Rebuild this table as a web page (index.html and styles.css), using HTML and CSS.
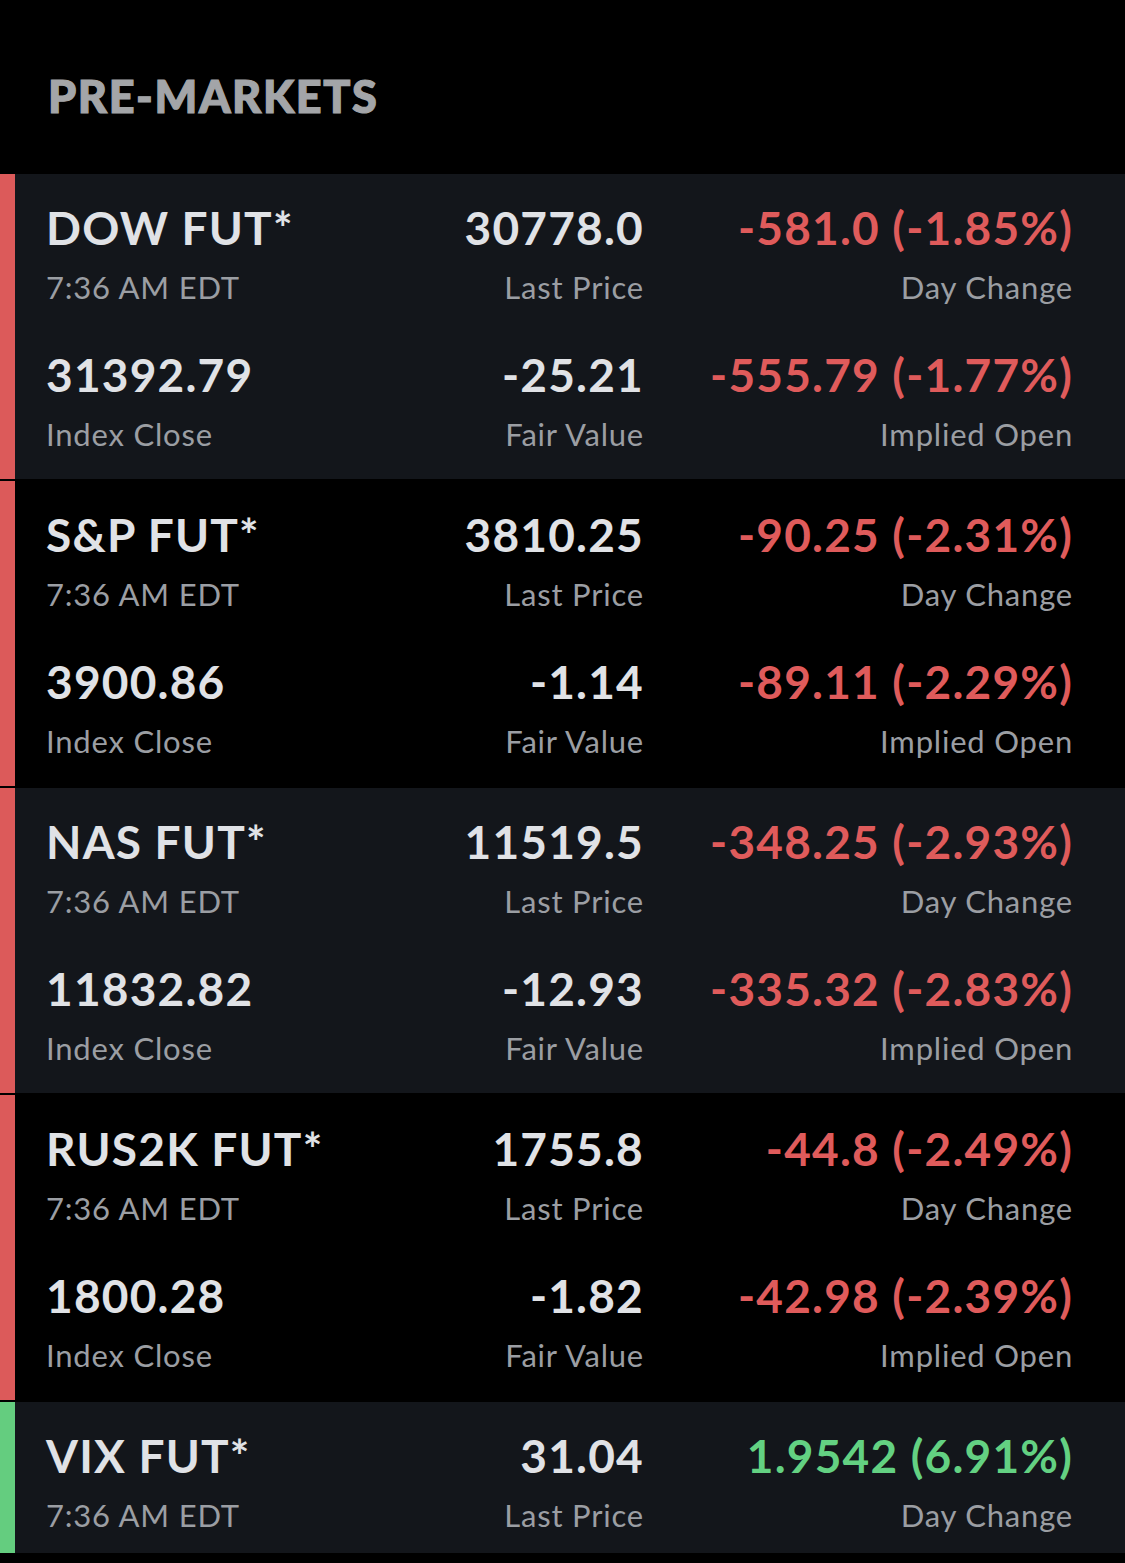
FILE: index.html
```html
<!DOCTYPE html>
<html lang="en">
<head>
<meta charset="utf-8">
<title>Pre-Markets</title>
<link rel="stylesheet" href="styles.css">
</head>
<body>
<header class="head"><h1 class="title">PRE-MARKETS</h1></header>
<main class="list">
  <section class="card shade down">
    <div class="row">
      <div class="cell"><div class="big">DOW FUT*</div><div class="label">7:36 AM EDT</div></div>
      <div class="cell num"><div class="big">30778.0</div><div class="label">Last Price</div></div>
      <div class="cell num"><div class="big neg">-581.0 (-1.85%)</div><div class="label">Day Change</div></div>
    </div>
    <div class="row">
      <div class="cell"><div class="big">31392.79</div><div class="label">Index Close</div></div>
      <div class="cell num"><div class="big">-25.21</div><div class="label">Fair Value</div></div>
      <div class="cell num"><div class="big neg">-555.79 (-1.77%)</div><div class="label">Implied Open</div></div>
    </div>
  </section>
  <section class="card down">
    <div class="row">
      <div class="cell"><div class="big">S&amp;P FUT*</div><div class="label">7:36 AM EDT</div></div>
      <div class="cell num"><div class="big">3810.25</div><div class="label">Last Price</div></div>
      <div class="cell num"><div class="big neg">-90.25 (-2.31%)</div><div class="label">Day Change</div></div>
    </div>
    <div class="row">
      <div class="cell"><div class="big">3900.86</div><div class="label">Index Close</div></div>
      <div class="cell num"><div class="big">-1.14</div><div class="label">Fair Value</div></div>
      <div class="cell num"><div class="big neg">-89.11 (-2.29%)</div><div class="label">Implied Open</div></div>
    </div>
  </section>
  <section class="card shade down">
    <div class="row">
      <div class="cell"><div class="big">NAS FUT*</div><div class="label">7:36 AM EDT</div></div>
      <div class="cell num"><div class="big">11519.5</div><div class="label">Last Price</div></div>
      <div class="cell num"><div class="big neg">-348.25 (-2.93%)</div><div class="label">Day Change</div></div>
    </div>
    <div class="row">
      <div class="cell"><div class="big">11832.82</div><div class="label">Index Close</div></div>
      <div class="cell num"><div class="big">-12.93</div><div class="label">Fair Value</div></div>
      <div class="cell num"><div class="big neg">-335.32 (-2.83%)</div><div class="label">Implied Open</div></div>
    </div>
  </section>
  <section class="card down">
    <div class="row">
      <div class="cell"><div class="big">RUS2K FUT*</div><div class="label">7:36 AM EDT</div></div>
      <div class="cell num"><div class="big">1755.8</div><div class="label">Last Price</div></div>
      <div class="cell num"><div class="big neg">-44.8 (-2.49%)</div><div class="label">Day Change</div></div>
    </div>
    <div class="row">
      <div class="cell"><div class="big">1800.28</div><div class="label">Index Close</div></div>
      <div class="cell num"><div class="big">-1.82</div><div class="label">Fair Value</div></div>
      <div class="cell num"><div class="big neg">-42.98 (-2.39%)</div><div class="label">Implied Open</div></div>
    </div>
  </section>
  <section class="card shade up short">
    <div class="row">
      <div class="cell"><div class="big">VIX FUT*</div><div class="label">7:36 AM EDT</div></div>
      <div class="cell num"><div class="big">31.04</div><div class="label">Last Price</div></div>
      <div class="cell num"><div class="big pos">1.9542 (6.91%)</div><div class="label">Day Change</div></div>
    </div>
  </section>
</main>
</body>
</html>
```
FILE: styles.css
```css
html, body {
  margin: 0;
  padding: 0;
  background: #000;
}
body {
  font-family: "Lato", "Liberation Sans", sans-serif;
  color: #e0e2e6;
  width: 1125px;
  height: 1563px;
  overflow: hidden;
}
.head {
  height: 174px;
  box-sizing: border-box;
  padding: 70px 0 0 48px;
}
.title {
  margin: 0;
  font-size: 45px;
  line-height: 52px;
  font-weight: 900;
  color: #a3a5a8;
  letter-spacing: 1.6px;
  -webkit-text-stroke: 1.2px #a3a5a8;
}
.list {
  display: flex;
  flex-direction: column;
  gap: 2px;
}
.card {
  box-sizing: border-box;
  height: 305px;
  padding: 26px 53px 25px 31px;
  border-left: 15px solid #dc5a5a;
  display: flex;
  flex-direction: column;
  gap: 40px;
  background: #000;
}
.card.shade { background: #13161b; }
.card.up { border-left-color: #64cd7f; }
.card.short { height: 151px; padding-bottom: 18px; }
.row {
  display: grid;
  grid-template-columns: 1fr 260px 429px;
}
.cell { display: flex; flex-direction: column; }
.cell.num { align-items: flex-end; text-align: right; }
.cell.num .big, .cell.num .label { margin-right: -1px; }
.big {
  font-size: 46px;
  line-height: 56px;
  font-weight: 700;
  letter-spacing: 1.2px;
  white-space: nowrap;
}
.label {
  margin-top: 11px;
  font-size: 31px;
  line-height: 40px;
  font-weight: 400;
  letter-spacing: 0.8px;
  color: #9b9ea3;
  white-space: nowrap;
}
.neg { color: #df5b5b; }
.pos { color: #63d182; }
```
